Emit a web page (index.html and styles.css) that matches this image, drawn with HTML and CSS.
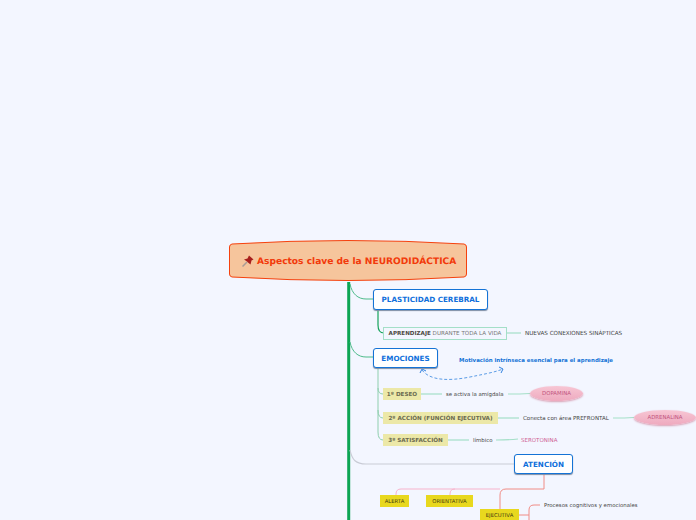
FILE: index.html
```html
<!DOCTYPE html>
<html lang="es">
<head>
<meta charset="utf-8">
<title>Aspectos clave de la NEURODIDÁCTICA</title>
<link rel="stylesheet" href="styles.css">
</head>
<body>
<main class="map">
  <svg class="links" width="696" height="520" viewBox="0 0 696 520" fill="none">
    <path class="l-trunk" d="M348.700 282V520"/>
    <path class="l-green" d="M350 284C352 294 358 299 366 299H373"/>
    <path class="l-green" d="M350 342C352 352 358 357 366 357H373"/>
    <path class="l-grey" d="M350 450C352 460 356 464 366 464H514"/>
    <path class="l-dark" d="M378 310V325Q378 333 384 333"/>
    <path class="l-mint" d="M507 333H521"/>
    <path class="l-thin" d="M378 368V432Q378 440 383 440"/>
    <path class="l-thin" d="M378 388Q378 394 383 394"/>
    <path class="l-thin" d="M378 410Q378 418 383 418"/>
    <path class="l-mint" d="M421 394H442"/>
    <path class="l-mint" d="M508 394Q520 394 530 393.500"/>
    <path class="l-mint" d="M498 418H519"/>
    <path class="l-mint" d="M613 418Q625 418 634 417.500"/>
    <path class="l-mint" d="M448 440H469"/>
    <path class="l-mint" d="M496 440Q508 440 518 439"/>
    <path class="l-dash" d="M422 370C430 381 450 381 470 377S495 372 503 369"/>
    <path class="l-arrow" d="M420 373L422 369L426 371M499 367L503 369L501 373"/>
    <path class="l-salmon" d="M544 474V489H506Q500 489 500 495V510"/>
    <path class="l-pink" d="M500 489H455Q450 489 450 494V495"/>
    <path class="l-pink" d="M455 489H401Q396 489 396 494V495"/>
    <path class="l-salmon" d="M519 515H529M529 520V510Q529 505 534 505H540"/>
  </svg>

  <h1 class="node root">
    <svg class="root-shape" width="240" height="42" viewBox="0 0 240 42">
      <path d="M4 4Q120 -3 236 4Q238.500 4.500 238.500 7V34Q238.500 36.500 236 37Q120 44 4 37Q1.500 36.500 1.500 34V7Q1.500 4.500 4 4Z"/>
    </svg>
    <svg class="pin" width="12" height="12" viewBox="0 0 12 12">
      <path class="pin-needle" d="M.5 11.500L5 7"/>
      <path class="pin-head" d="M7 .5L11.500 4.500L9.500 5.500L8.500 9.500L6 7.500L5 6.500L2 4.500L5.500 3.500Z"/>
    </svg>
    <span class="root-text">Aspectos clave de la NEURODIDÁCTICA</span>
  </h1>

  <div class="node topic t-plast">PLASTICIDAD CEREBRAL</div>
  <div class="node outline t-apr"><span><b>APRENDIZAJE</b> DURANTE TODA LA VIDA</span></div>
  <div class="node plain t-nuevas">NUEVAS CONEXIONES SINÁPTICAS</div>

  <div class="node topic t-emo">EMOCIONES</div>
  <div class="node note t-motiv">Motivación intrínseca esencial para el aprendizaje</div>
  <div class="node khaki t-deseo">1º DESEO</div>
  <div class="node plain t-amig">se activa la amígdala</div>
  <div class="node pill t-dopa">DOPAMINA</div>
  <div class="node khaki t-accion">2º ACCIÓN (FUNCIÓN EJECUTIVA)</div>
  <div class="node plain t-conecta">Conecta con área PREFRONTAL</div>
  <div class="node pill t-adre">ADRENALINA</div>
  <div class="node khaki t-satis">3º SATISFACCIÓN</div>
  <div class="node plain t-limb">límbico</div>
  <div class="node pink-text t-sero">SEROTONINA</div>

  <div class="node topic t-aten">ATENCIÓN</div>
  <div class="node yellow t-alerta">ALERTA</div>
  <div class="node yellow t-orient">ORIENTATIVA</div>
  <div class="node yellow t-ejec">EJECUTIVA</div>
  <div class="node plain t-proc">Procesos cognitivos y emocionales</div>
</main>
</body>
</html>
```

FILE: styles.css
```css
* { box-sizing: border-box; }
html, body { margin: 0; height: 100%; overflow: hidden; background: #f3f6ff; }
.map {
  position: relative;
  width: 696px;
  height: 520px;
  overflow: hidden;
  font-family: "DejaVu Sans", Verdana, sans-serif;
  text-rendering: geometricPrecision;
}
.links { position: absolute; left: 0; top: 0; }
.l-trunk { stroke: #0ca554; stroke-width: 3; }
.l-green { stroke: #4dbb8a; stroke-width: 1; }
.l-dark { stroke: #17a35c; stroke-width: 1.200; }
.l-grey { stroke: #c9ccd6; stroke-width: 1.200; }
.l-mint { stroke: #a4dfc8; stroke-width: 1.200; }
.l-thin { stroke: #8fcfae; stroke-width: 1; }
.l-dash { stroke: #5b9ce6; stroke-width: 1; stroke-dasharray: 3 2; }
.l-arrow { stroke: #2f80e0; stroke-width: 1; }
.l-salmon { stroke: #f08c86; stroke-width: 1; }
.l-pink { stroke: #f7b3cc; stroke-width: 1; }

.node {
  position: absolute;
  display: flex;
  align-items: center;
  justify-content: center;
  margin: 0;
  padding-top: 1px;
  white-space: nowrap;
}
.root { left: 229px; top: 241px; width: 238px; height: 40px; font-size: 9.100px; font-weight: 700; color: #f23a0b; }
.root-shape { position: absolute; left: -1px; top: -1px; overflow: visible; }
.root-shape path { fill: #f6c59c; stroke: #f5410e; stroke-width: 1; }
.pin { position: absolute; left: 13px; top: 14px; }
.pin-needle { stroke: #a89c96; stroke-width: 1.500; fill: none; }
.pin-head { fill: #a81f1c; }
.root-text { position: absolute; left: 28px; top: 14px; line-height: 14px; }

.topic {
  background: #fff;
  border: 1px solid #1473d6;
  border-radius: 3px;
  box-shadow: 0 1px 1px #7d8da5;
  color: #0f6fdb;
  font-size: 7.200px;
  font-weight: 700;
  padding-top: 0;
}
.t-plast { left: 373px; top: 289px; width: 115px; height: 21px; }
.t-emo { left: 373px; top: 348px; width: 65px; height: 20px; }
.t-aten { left: 514px; top: 454px; width: 59px; height: 20px; }

.outline {
  background: #f3f6ff;
  border: 1px solid #a4dfc8;
  color: #777;
  font-size: 5.600px;
}
.outline b { color: #4f4a45; }
.t-apr { left: 383px; top: 327px; width: 124px; height: 13px; }

.plain { color: #444; font-size: 5.400px; }
.t-nuevas { left: 525px; top: 330px; font-size: 5.650px; }
.t-amig { left: 446px; top: 391px; }
.t-conecta { left: 523px; top: 415px; font-size: 5.500px; }
.t-limb { left: 473px; top: 437px; }
.t-proc { left: 544px; top: 502px; }

.note { color: #1473d6; font-size: 5.450px; font-weight: 700; }
.t-motiv { left: 459px; top: 357px; }

.khaki { background: #ece8a8; color: #6b6b50; font-size: 5.650px; font-weight: 700; height: 12px; }
.t-deseo { left: 383px; top: 388px; width: 38px; }
.t-accion { left: 383px; top: 412px; width: 115px; }
.t-satis { left: 383px; top: 434px; width: 65px; }

.pill {
  background: linear-gradient(#f7c6d4, #eeaabf);
  border-radius: 50%;
  box-shadow: 0 1px 2px #d8a0b4;
  color: #c2557f;
  font-size: 5.400px;
}
.t-dopa { left: 530px; top: 386px; width: 53px; height: 15px; }
.t-adre { left: 634px; top: 410px; width: 62px; height: 15px; }

.pink-text { color: #cf5f95; font-size: 5.500px; }
.t-sero { left: 521px; top: 437px; }

.yellow { background: #e8d81e; color: #3f3a10; font-size: 5.300px; height: 12px; }
.t-alerta { left: 380px; top: 495px; width: 29px; }
.t-orient { left: 426px; top: 495px; width: 47px; }
.t-ejec { left: 480px; top: 509px; width: 39px; }
```
